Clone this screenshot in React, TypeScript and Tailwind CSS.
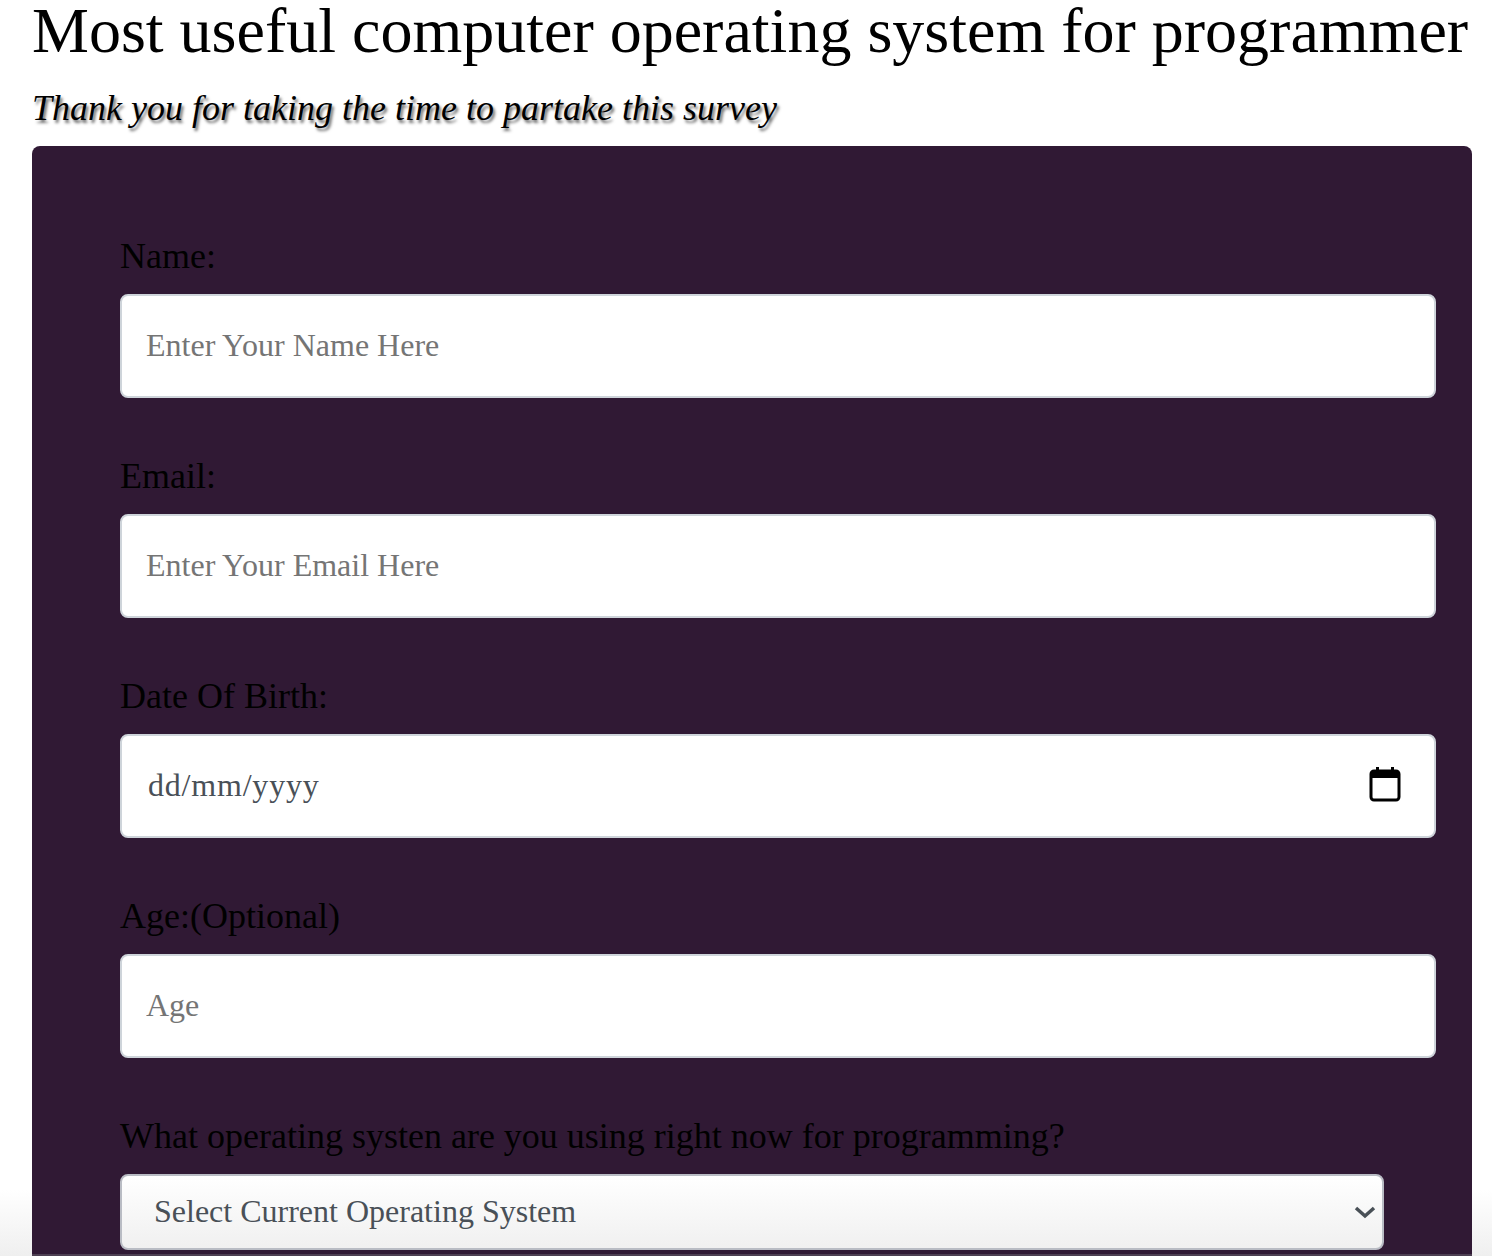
function Field({ label, placeholder }: { label: string; placeholder: string }) {
  return (
    <div className="mb-[52px]">
      <label className="block h-[64px] text-[36px] leading-[52px] text-black">{label}</label>
      <input
        type="text"
        placeholder={placeholder}
        className="block h-[104px] w-full rounded-lg border-[2px] border-[#ced4da] bg-white px-6 pb-[2px] text-[32px] text-[#495057] outline-none placeholder:text-[#757575]"
      />
    </div>
  );
}

export default function App() {
  return (
    <div className="relative h-[1256px] overflow-hidden bg-[linear-gradient(to_bottom,#ffffff_1190px,#efefef_1256px)] pl-8 pr-5 font-['Liberation_Serif',serif]">
      <h1 className="-mt-px h-[64px] whitespace-nowrap text-[64px] leading-[64px] text-black">
        Most useful computer operating system for programmer
      </h1>
      <p className="mt-[20px] h-[63px] text-[36px] italic leading-[50px] text-black [text-shadow:2px_3px_3px_#707070]">
        Thank you for taking the time to partake this survey
      </p>

      {/* Survey form */}
      <form className="rounded-lg bg-[#301934] pb-12 pl-[88px] pr-9 pt-[84px]">
        <Field label="Name:" placeholder="Enter Your Name Here" />
        <Field label="Email:" placeholder="Enter Your Email Here" />

        <div className="mb-[52px]">
          <label className="block h-[64px] text-[36px] leading-[52px] text-black">Date Of Birth:</label>
          <div className="flex h-[104px] items-center justify-between rounded-lg border-[2px] border-[#ced4da] bg-white pb-[2px] pl-[26px] pr-[33px] text-[32px] text-[#495057]">
            <span className="tracking-[0.8px]">dd/mm/yyyy</span>
            <svg className="-mt-[2px]" width="32" height="36" viewBox="0 0 32 36" fill="none">
              <path d="M7 1h3v4H7zM22 1h3v4h-3z" fill="#000" />
              <rect x="2" y="5" width="28" height="29" rx="3" stroke="#000" strokeWidth="3" />
              <rect x="2" y="5" width="28" height="7" fill="#000" />
            </svg>
          </div>
        </div>

        <Field label="Age:(Optional)" placeholder="Age" />

        <label className="block h-[64px] text-[36px] leading-[52px] text-black">
          What operating systen are you using right now for programming?
        </label>
        <div className="flex h-[76px] w-[1264px] items-center justify-between rounded-lg border-[2px] border-[#b9bcc4] bg-[linear-gradient(to_bottom,#ffffff,#f0f0f0)] pb-[2px] pl-8 pr-[6px] text-[32px] text-[#495057]">
          <span>Select Current Operating System</span>
          <svg className="mt-[2px]" width="22" height="14" viewBox="0 0 22 14" fill="none">
            <path d="M2 3l9 8 9-8" stroke="#495057" strokeWidth="3.5" />
          </svg>
        </div>
      </form>

      <div className="absolute bottom-0 left-8 right-5 h-[2px] bg-[#4d3f52]" />
    </div>
  );
}
